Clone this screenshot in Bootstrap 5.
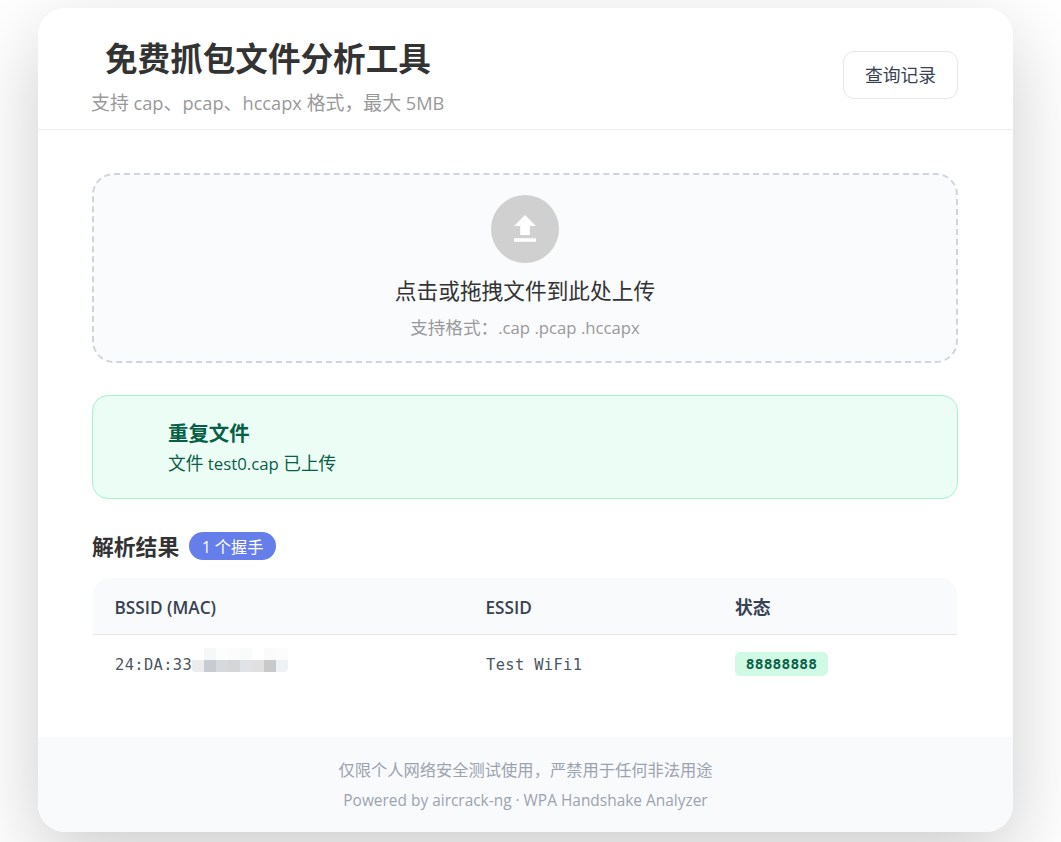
<!DOCTYPE html>
<html lang="zh-CN">
<head>
<meta charset="utf-8">
<meta name="viewport" content="width=device-width, initial-scale=1">
<title>免费抓包文件分析工具</title>
<link href="https://cdn.jsdelivr.net/npm/bootstrap@5.3.0/dist/css/bootstrap.min.css" rel="stylesheet">
<style>
  body { background: #fff; color: #333; font-family: "Open Sans", "Noto Sans CJK SC", sans-serif; height: 842px; overflow: hidden; }
  .panel { width: 975px; height: 824px; margin: 8px 0 0 38px; border-radius: 27px; background: #fff; box-shadow: 0 27px 81px rgba(0,0,0,.2); overflow: hidden; }
  .cjk { font-family: "Noto Sans CJK SC", sans-serif; }
  .lat { font-family: "Open Sans", sans-serif; font-size: .95em; white-space: pre; }
  .panel-head { height: 122px; padding: 26px 55px 0 54px; border-bottom: 1px solid #eee; }
  .panel-title { font-size: 32.6px; line-height: 46px; padding-left: 13px; margin: 0; }
  .panel-sub { font-size: 18.9px; line-height: 28px; margin-top: 8px; margin-left: -1px; color: #999; }
  .panel-sub .lat { font-size: .965em; }
  .btn-log { width: 115px; height: 48px; margin-top: 17px; padding: 0 0 2px; border: 1px solid #e5e7eb; border-radius: 11px; background: #fff; color: #374151; font-size: 17.8px; }
  .panel-main { height: 607px; padding: 43px 55px 0 54px; }
  .drop { height: 190px; padding-top: 20px; border: 2px dashed #d1d5db; border-radius: 22px; background: #fafbfd; }
  .drop-icon { width: 68px; height: 68px; background: #d0d0d0; }
  .drop-title { font-size: 21.7px; line-height: 32px; margin-top: 11px; }
  .drop-hint { font-size: 17.6px; line-height: 26px; margin-top: 8px; color: #999; }
  .notice { height: 104px; margin-top: 32px; padding: 21px 0 0 75px; border: 1px solid #a7f3d0; border-radius: 16px; background: #ecfdf5; color: #065f46; }
  .notice-title { font-size: 20.4px; line-height: 30px; }
  .notice-text { font-size: 17.7px; line-height: 26px; margin-top: 2px; }
  .result-head { height: 28px; margin-top: 33px; }
  .result-title { font-size: 21.8px; line-height: 28px; margin: 0; }
  .count { width: 87px; height: 28px; margin-left: 10px; border-radius: 14px; background: #667eea; color: #fff; font-size: 16.2px; line-height: 29px; }
  .grid-table { width: 864px; margin: 18px 1px 0; border-collapse: separate; border-spacing: 0; table-layout: fixed; }
  .grid-table th { height: 57px; padding: 0 0 0 21.5px; background: #f9fafc; border-bottom: 1px solid #e5e7eb; color: #374151; font-size: 17.8px; font-weight: 600; }
  .grid-table th .lat { font-size: 17.2px; }
  .grid-table th:not(.cjk) { padding-top: 2px; }
  .grid-table th:first-child { border-top-left-radius: 16px; }
  .grid-table th:last-child { border-top-right-radius: 16px; padding-left: 22px; }
  .grid-table td { height: 58px; padding: 0 0 0 22px; color: #4b5563; font-family: "DejaVu Sans Mono", monospace; font-size: 15.4px; letter-spacing: .36px; }
  .grid-table td .mono-line { padding-top: 3px; }
  .mask { display: grid; grid-template-columns: repeat(8, 12px); grid-template-rows: 12px 12px; margin: -11px 0 0 0; overflow: hidden; border-radius: 0 0 4px 3px; }
  .pass { width: 93px; height: 24px; border-radius: 5px; background: #d1fae5; color: #065f46; font-size: 14.5px; font-weight: 700; line-height: 24px; letter-spacing: .2px; }
  .panel-foot { height: 95px; padding-top: 17px; background: #f9fafc; color: #9ca3af; font-size: 16.27px; line-height: 30px; }
  .foot-credit { margin-top: 1px; }
</style>
</head>
<body>
<main class="panel">
  <header class="panel-head d-flex justify-content-between align-items-start">
    <div>
      <h1 class="panel-title cjk fw-bold text-nowrap">免费抓包文件分析工具</h1>
      <div class="panel-sub cjk text-nowrap">支持<span class="lat"> cap</span>、<span class="lat">pcap</span>、<span class="lat">hccapx </span>格式，最大<span class="lat"> 5MB</span></div>
    </div>
    <button type="button" class="btn btn-log cjk">查询记录</button>
  </header>

  <section class="panel-main">
    <div class="drop d-flex flex-column align-items-center">
      <div class="drop-icon rounded-circle d-flex align-items-center justify-content-center">
        <svg width="38" height="38" viewBox="0 0 38 38" fill="#fff"><path d="M14.2 25.1V16H8L19 5l11 11h-6.2v9.1zM8 28.2h22v3.5H8z"/></svg>
      </div>
      <div class="drop-title cjk">点击或拖拽文件到此处上传</div>
      <div class="drop-hint cjk">支持格式：<span class="lat">.cap .pcap .hccapx</span></div>
    </div>

    <div class="notice">
      <div class="notice-title cjk fw-bold">重复文件</div>
      <div class="notice-text cjk">文件<span class="lat"> test0.cap </span>已上传</div>
    </div>

    <div class="result-head d-flex align-items-center">
      <h2 class="result-title cjk fw-bold">解析结果</h2>
      <span class="count cjk text-center"><span class="lat">1 </span>个握手</span>
    </div>

    <table class="grid-table">
      <colgroup><col style="width:371px"><col style="width:249px"><col></colgroup>
      <thead>
        <tr><th><span class="lat">BSSID (MAC)</span></th><th><span class="lat">ESSID</span></th><th class="cjk">状态</th></tr>
      </thead>
      <tbody>
        <tr>
          <td>
            <div class="mono-line d-flex align-items-center"><span>24:DA:33</span>
              <span class="mask">
                <i></i><i style="background:#f6f8f8"></i><i style="background:#fcfdfd"></i><i style="background:#fcfcfc"></i><i style="background:#f9fbfa"></i><i></i><i style="background:#fafafa"></i><i style="background:#fcfcfc"></i>
                <i style="background:#ececec"></i><i style="background:#c8ccd2"></i><i style="background:#d6dade"></i><i style="background:#d6d6d8"></i><i style="background:#e2e3e6"></i><i style="background:#e0e0e0"></i><i style="background:#c9c9ca"></i><i style="background:#edf2f7"></i>
              </span>
            </div>
          </td>
          <td><div class="mono-line">Test WiFi1</div></td>
          <td><div class="pass text-center">88888888</div></td>
        </tr>
      </tbody>
    </table>
  </section>

  <footer class="panel-foot text-center">
    <div class="cjk">仅限个人网络安全测试使用，严禁用于任何非法用途</div>
    <div class="foot-credit"><span class="lat">Powered by aircrack-ng · WPA Handshake Analyzer</span></div>
  </footer>
</main>
<script src="https://cdn.jsdelivr.net/npm/bootstrap@5.3.0/dist/js/bootstrap.bundle.min.js"></script>
</body>
</html>
